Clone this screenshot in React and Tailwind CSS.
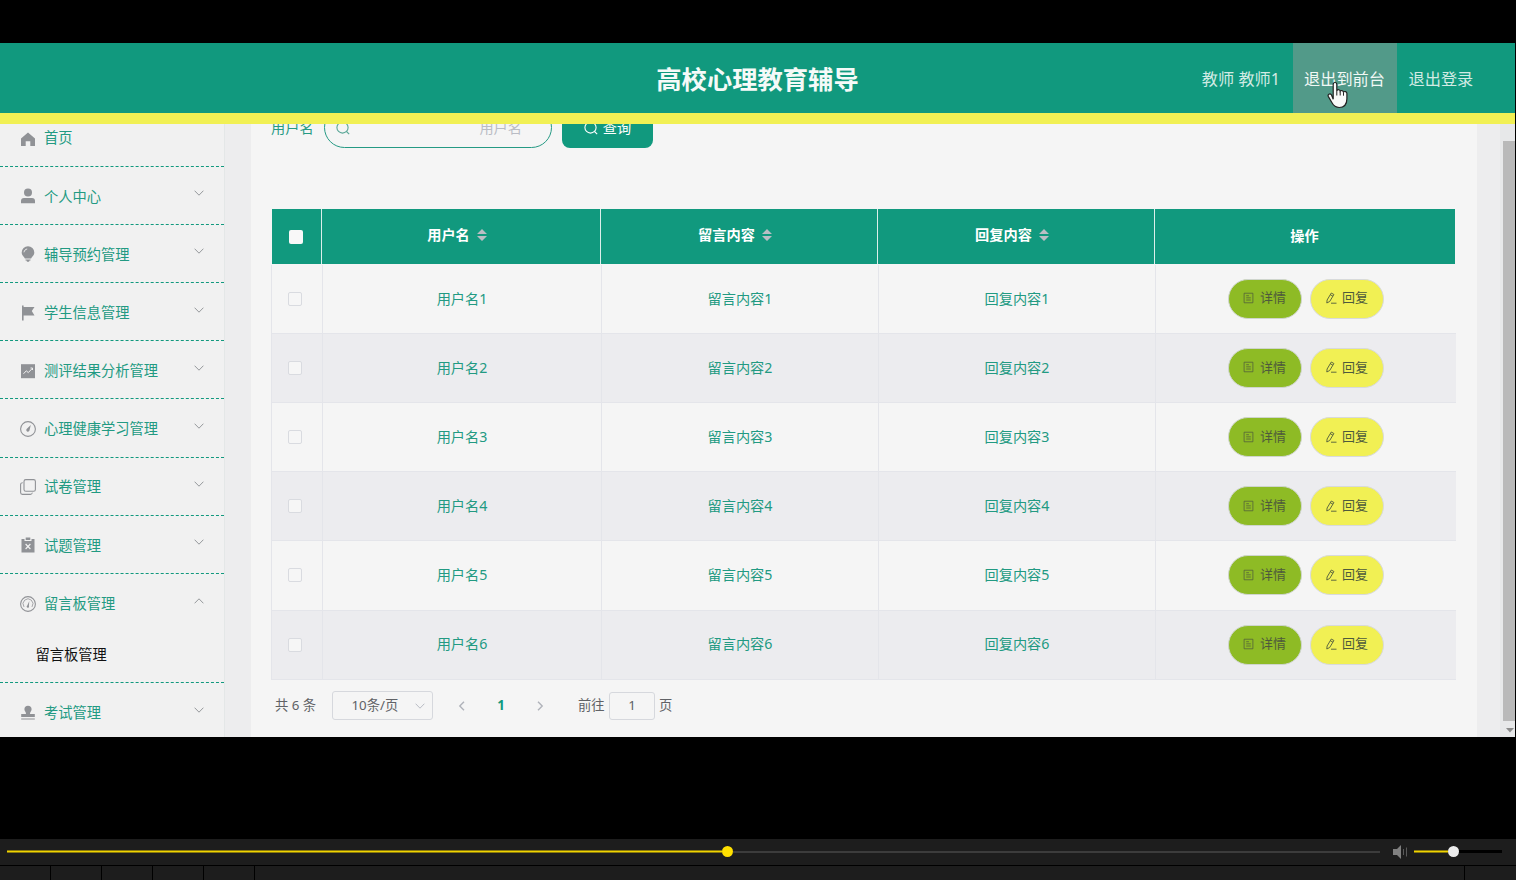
import clsx from "clsx";

const menus = [
    { name: "首页", icon: "home" },
    { name: "个人中心", icon: "user", arrow: true },
    { name: "辅导预约管理", icon: "bulb", arrow: true },
    { name: "学生信息管理", icon: "flag", arrow: true },
    { name: "测评结果分析管理", icon: "chart", arrow: true },
    { name: "心理健康学习管理", icon: "compass", arrow: true },
    { name: "试卷管理", icon: "copy", arrow: true },
    { name: "试题管理", icon: "clipboard", arrow: true },
    { name: "留言板管理", icon: "gauge", arrow: true, children: ["留言板管理"] },
    { name: "考试管理", icon: "stamp", arrow: true },
];

const rows = [1, 2, 3, 4, 5, 6];

const line = { fill: "none", stroke: "currentColor", strokeWidth: 1.1, strokeLinecap: "round", strokeLinejoin: "round" };

const icons = {
    home: <path fill="currentColor" d="M8 1.6 15 7.4V15H10.3V10.2H5.7V15H1V7.4Z" />,
    user: (
        <g fill="currentColor">
            <circle cx="8" cy="4.6" r="4" />
            <path d="M1 15.2V13a3 3 0 0 1 3-3h8a3 3 0 0 1 3 3v2.2Z" />
        </g>
    ),
    bulb: (
        <g>
            <path fill="currentColor" d="M8 .3a6.3 6.3 0 0 1 6.3 6.2c0 2.6-2 3.9-3.2 6H4.9C3.700 10.400 1.700 9.100 1.700 6.500A6.300 6.300 0 0 1 8 .3ZM5.500 13.500h5V14.500H9.500L9 15.800H7L6.500 14.500h-1Z" />
            <path d="M4 6.300C4.200 4.500 5.500 3.200 7.200 3" fill="none" stroke="#f1f1f1" strokeWidth="0.9" />
        </g>
    ),
    flag: <path fill="currentColor" d="M2 .5h1.600V2H14.500L11.800 6l2.700 4.500H3.600v5H2Z" />,
    chart: (
        <g>
            <path fill="currentColor" d="M1 1.200h14v14H1Z" />
            <path d="m3.500 10.800 2.800-3 2 1.800 4-4.200M10.500 5h2v2" fill="none" stroke="#f1f1f1" strokeWidth="1" />
        </g>
    ),
    compass: (
        <g>
            <circle cx="8" cy="8" r="7.400" {...line} />
            <path fill="currentColor" d="m10.800 4-1.300 5.300a1.600 1.600 0 1 1-2.600-1.500Z" />
        </g>
    ),
    copy: (
        <g {...line}>
            <rect x="4" y=".6" width="11.400" height="11.600" rx="1.800" />
            <path d="M2.300 3.800C1.200 3.900.6 4.500.6 5.600v8c0 1.200.6 1.800 1.800 1.800h8c1.100 0 1.600-.5 1.800-1.400" />
        </g>
    ),
    clipboard: (
        <g>
            <path fill="currentColor" d="M1.500 2h3v2h7V2h3v13.500h-13ZM5.700.5h4.600v2.600H5.700Z" />
            <path d="m5.600 7 4.800 5M10.400 7l-4.800 5" stroke="#f1f1f1" strokeWidth="1.200" />
        </g>
    ),
    gauge: (
        <g>
            <circle cx="8" cy="8" r="7.400" {...line} />
            <path d="M3.800 10.600A5 5 0 1 1 12.200 10.600" {...line} strokeWidth="0.8" />
            <path fill="currentColor" d="m9.300 5-.4 5a1.200 1.200 0 1 1-1.600-.5Z" />
        </g>
    ),
    stamp: (
        <path
            fill="currentColor"
            d="M8 .8a3.600 3.600 0 0 1 3.600 3.500c0 1.700-1.600 2.500-1.600 4.800h4.800V12H1.200V9.100H6c0-2.300-1.600-3.100-1.600-4.800A3.600 3.600 0 0 1 8 .8ZM1.200 13.400h13.600v1.200H1.200Z"
        />
    ),
};

function Icon({ name }) {
    return (
        <svg viewBox="0 0 16 16" className="w-4 h-4 shrink-0 text-[#909296]">
            {icons[name]}
        </svg>
    );
}

function Chevron({ className }) {
    return (
        <svg viewBox="0 0 10 10" className={clsx("w-2.5 h-2.5 shrink-0", className)}>
            <path d="M.6 2.700 5 7.200 9.400 2.700" fill="none" stroke="currentColor" strokeWidth="1" />
        </svg>
    );
}

function SearchIcon({ className }) {
    return (
        <svg viewBox="0 0 14 14" className={className}>
            <circle cx="6.500" cy="6.500" r="5.600" fill="none" stroke="currentColor" strokeWidth="1.100" />
            <path d="m10.500 10.500 2.700 2.700" stroke="currentColor" strokeWidth="1.100" />
        </svg>
    );
}

function Header() {
    return (
        <header className="relative z-10 h-[81px] shrink-0 flex bg-[#11997e] border-b-[11px] border-[#f1f054] text-[16.200px] text-[#d2ebe4]">
            <div className="flex-1" />
            <h1 className="flex items-center text-[25.300px] font-bold text-[#f5faf8] pt-[3px]">高校心理教育辅导</h1>
            <div className="flex-1 flex justify-end items-stretch">
                <div className="flex items-center pr-[13px] pt-0.5">教师 教师1</div>
                <div className="relative w-[104px] flex items-center justify-center bg-[#529a89] text-[#f1f8f5] pt-0.5 pr-px">
                    退出到前台
                    <svg viewBox="0 0 22 28" className="absolute left-[34px] top-[38px] w-[22px] h-[28px]">
                        <path
                            d="M6.200 18.200V3.500c0-2.700 3.600-2.700 3.600 0v6.200c.8-1.500 3.200-1.200 3.400.5.900-1.200 2.900-.8 3.200.8 1.200-1 3.500-.4 3.500 1.500v5.300c0 5.200-2.700 8.700-7.700 8.700-3.800 0-5.600-1.700-7.200-4.700l-3.600-6.200c-1.100-2.200 1.500-3.500 2.900-2Z"
                            fill="#fafafa"
                            stroke="#222"
                            strokeWidth="1.200"
                        />
                        <path d="M9.800 9.500v5M13.200 10.500v4M16.500 11.300v3.400" stroke="#222" strokeWidth="1" />
                    </svg>
                </div>
                <div className="w-[118px] flex items-center pl-[11.500px] pt-0.5">退出登录</div>
            </div>
        </header>
    );
}

function Sidebar() {
    return (
        <aside className="w-[225px] shrink-0 bg-[#f1f1f1] border-r border-[#e4e7e7] text-[14.250px] text-[#229a82]">
            <ul className="-mt-[15.600px]">
                {menus.map((m) => (
                    <li key={m.name} className="border-b border-dashed border-[#11997e]">
                        <div className="h-[57.200px] flex items-center pl-[19.500px] pr-5">
                            <div className={clsx("flex", m.icon === "home" ? "pt-1" : "pt-0.5")}>
                                <Icon name={m.icon} />
                            </div>
                            <span className={clsx("ml-[8.500px] flex-1", m.icon === "home" ? "pt-px" : "pt-0.5")}>{m.name}</span>
                            {m.arrow && <Chevron className={clsx("mb-1 text-[#95989b]", m.children && "rotate-180")} />}
                        </div>
                        {m.children?.map((c) => (
                            <div key={c} className="h-[51px] pl-[35.500px] pt-[12.500px] text-[#111]">{c}</div>
                        ))}
                    </li>
                ))}
            </ul>
        </aside>
    );
}

function SearchBar() {
    return (
        <div className="-mt-[17px] h-[41px] flex text-[14.200px]">
            <label className="w-[53px] leading-[41px] text-[#259a84]">用户名</label>
            <div className="w-[228px] h-[41px] rounded-full border border-[#259a84] flex items-center justify-between pl-[11px] pr-[29px] text-[#b9bcc4]">
                <SearchIcon className="w-3.5 h-3.5 text-[#5aa797]" />
                <span>用户名</span>
            </div>
            <button className="ml-2.5 w-[91px] rounded-lg bg-[#11997e] text-white flex items-center justify-center gap-[5px]">
                <SearchIcon className="w-3.5 h-3.5" />
                查询
            </button>
        </div>
    );
}

function Sort() {
    return (
        <svg viewBox="0 0 10 12" className="w-2.5 h-3 ml-[7px]">
            <path d="M5 0 10 5H0ZM0 7h10L5 12Z" fill="#b9bec4" />
        </svg>
    );
}

function Table() {
    return (
        <div className="mt-[61px] w-[1185px] text-[14.200px] text-[#229a82]">
            <div className="ml-px w-[1183px] h-[55px] grid grid-cols-[50px_279px_277px_277px_300px] bg-[#11997e] text-white font-bold">
                <div className="flex items-center justify-center border-r border-[#dcefeb] pr-px">
                    <span className="w-3.5 h-3.5 rounded-[2px] bg-[#f8f8f8]" />
                </div>
                {["用户名", "留言内容", "回复内容"].map((t) => (
                    <div key={t} className="flex items-center justify-center border-r border-[#dcefeb] pb-[3px] pr-2">
                        {t}
                        <Sort />
                    </div>
                ))}
                <div className="flex items-center justify-center pb-px pr-px">操作</div>
            </div>
            <div className="pt-[0.600px]">
                {rows.map((n) => (
                    <div
                        key={n}
                        className={clsx(
                            "h-[69.200px] grid grid-cols-[52px_279px_277px_277px_300px] border-b border-[#e4e5ea]",
                            n % 2 === 0 && "bg-[#ececef]"
                        )}
                    >
                        <div className="flex items-center justify-center border-x border-[#e4e5ea] pr-1">
                            <span className="w-3.5 h-3.5 rounded-[2px] border border-[#d9dbe0] bg-[#f6f6f6]" />
                        </div>
                        {["用户名", "留言内容", "回复内容"].map((t) => (
                            <div key={t} className="flex items-center justify-center border-r border-[#e4e5ea] pb-px">{t}{n}</div>
                        ))}
                        <div className="flex items-center justify-center gap-2 text-[13px] text-[#4e5a3c] pr-px">
                            <button className="w-[74px] h-10 rounded-full bg-[#8ebb25] border border-[#cfd5cd] flex items-center justify-center gap-1.5 pb-px">
                                <svg viewBox="0 0 12 12" className="w-[11px] h-3" fill="none" stroke="currentColor" strokeWidth="0.8">
                                    <path d="M1.200.8h9.600v10.400H1.200ZM3.500 3.500h3M3.500 5.800h5M3.500 8.200h5" />
                                </svg>
                                详情
                            </button>
                            <button className="w-[74px] h-10 rounded-full bg-[#f1f054] border border-[#d8dadb] flex items-center justify-center gap-[5px] pb-px">
                                <svg viewBox="0 0 12 12" className="w-3 h-3" fill="none" stroke="currentColor" strokeWidth="0.9">
                                    <path d="M6.300 1 8.900 2.500 4.700 9.500 1.800 11 2.100 8ZM5.300 2.700 7.900 4.200M6 11.200h5.500" />
                                </svg>
                                回复
                            </button>
                        </div>
                    </div>
                ))}
            </div>
        </div>
    );
}

function Pagination() {
    return (
        <div className="mt-[11px] h-[30px] flex items-center text-[13.300px] text-[#606266] pl-1">
            <span className="w-[57px]">共 6 条</span>
            <div className="w-[101px] h-[29px] rounded-[3px] border border-[#d6d8dd] flex items-center justify-between pl-[18.500px] pr-[7px]">
                10条/页
                <Chevron className="text-[#b9bcc4]" />
            </div>
            <svg viewBox="0 0 10 10" className="w-2.5 h-2.5 ml-6 text-[#b0b3ba]">
                <path d="M7 .8 2.800 5 7 9.200" fill="none" stroke="currentColor" strokeWidth="1.400" />
            </svg>
            <span className="w-[68px] text-center font-bold text-[#11997e]">1</span>
            <svg viewBox="0 0 10 10" className="w-2.5 h-2.5 text-[#b0b3ba]">
                <path d="m3 .8 4.200 4.200L3 9.200" fill="none" stroke="currentColor" strokeWidth="1.400" />
            </svg>
            <span className="ml-[33px] w-[31px]">前往</span>
            <span className="w-[46px] h-7 rounded-[3px] border border-[#d6d8dd] flex items-center justify-center">1</span>
            <span className="ml-1">页</span>
        </div>
    );
}

function Player() {
    return (
        <div className="h-[41px] shrink-0 flex flex-col bg-black">
            <div className="h-[26px] bg-[#1d1d1d] flex items-center pl-[7px] pr-3.5 pb-px">
                <div className="w-[1373px] flex items-center">
                    <div className="w-[715px] h-[3px] bg-[#f0d400] border-y border-[#8a7a0c]" />
                    <div className="w-[11px] h-[11px] rounded-full bg-[#ffe000]" />
                    <div className="flex-1 h-0.5 bg-[#3c3c3c]" />
                </div>
                <svg viewBox="0 0 16 14" className="ml-3 w-4 h-3.5">
                    <path d="M1 4h4l4-4v14l-4-4H1Z" fill="#808080" />
                    <path d="M11.500 4v6" stroke="#5a5a5a" />
                    <path d="M14.500 2.500v9" stroke="#5a5a5a" />
                </svg>
                <div className="ml-1.5 flex items-center">
                    <div className="w-[34px] h-[3px] bg-[#f0d400] border-y border-[#8a7a0c]" />
                    <div className="w-[11px] h-[11px] rounded-full bg-[#ececec]" />
                    <div className="w-[43px] h-[3px] bg-black" />
                </div>
            </div>
            <div className="mt-px flex-1 flex gap-px">
                {[1, 2, 3, 4, 5].map((n) => (
                    <div key={n} className="w-[50px] bg-[#1d1d1d]" />
                ))}
                <div className="flex-1 bg-[#1d1d1d]" />
                <div className="w-[51px] bg-[#1d1d1d]" />
            </div>
        </div>
    );
}

function App() {
    return (
        <div className="h-[880px] w-[1516px] overflow-hidden bg-black flex flex-col font-['Noto_Sans','Noto_Sans_CJK_SC',sans-serif]">
            <div className="mt-[43px] h-[694px] w-[1515px] flex flex-col overflow-hidden">
                <Header />
                <div className="flex-1 min-h-0 flex bg-[#ededee]">
                    <Sidebar />
                    <main className="ml-[26px] w-[1226px] bg-[#f5f5f5] pl-5">
                        <SearchBar />
                        <Table />
                        <Pagination />
                    </main>
                    <div className="ml-[23px] w-[15px] bg-[#e7e8e9] flex flex-col items-end pt-[17px]">
                        <div className="w-3 h-[580px] bg-[#b9b9b9]" />
                        <svg viewBox="0 0 8 5" className="w-2 h-[5px] mt-[7px] mr-px">
                            <path d="M0 0h8L4 4.500Z" fill="#8b8b8b" />
                        </svg>
                    </div>
                </div>
            </div>
            <div className="flex-1" />
            <Player />
        </div>
    );
}

export default App;
